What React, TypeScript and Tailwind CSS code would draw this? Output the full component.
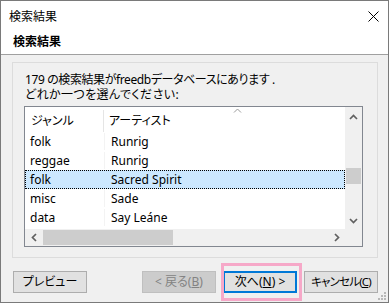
import React from "react";

const font = "font-['Noto_Sans','Noto_Sans_CJK_JP',sans-serif] [font-feature-settings:'palt']";

function ChevUp() {
  return (
    <svg width="9" height="6" viewBox="0 0 9 6">
      <path d="M1 5 L4.5 1.5 L8 5" fill="none" stroke="#606060" strokeWidth="1.7" />
    </svg>
  );
}
function ChevDown() {
  return (
    <svg width="9" height="6" viewBox="0 0 9 6">
      <path d="M1 1 L4.5 4.5 L8 1" fill="none" stroke="#606060" strokeWidth="1.7" />
    </svg>
  );
}
function ChevLeft() {
  return (
    <svg width="6" height="9" viewBox="0 0 6 9">
      <path d="M5 1 L1.5 4.5 L5 8" fill="none" stroke="#606060" strokeWidth="1.7" />
    </svg>
  );
}
function ChevRight() {
  return (
    <svg width="6" height="9" viewBox="0 0 6 9">
      <path d="M1 1 L4.5 4.5 L1 8" fill="none" stroke="#606060" strokeWidth="1.7" />
    </svg>
  );
}

const rows = [
  { g: "folk", a: "Runrig" },
  { g: "reggae", a: "Runrig" },
  { g: "folk", a: "Sacred Spirit", sel: true },
  { g: "misc", a: "Sade" },
  { g: "data", a: "Say Leáne" },
];

export default function App() {
  return (
    <div className={`relative w-[389px] h-[303px] border border-[#7a7a7a] flex flex-col bg-[#f0f0f0] text-black text-[12px] ${font}`}>
      {/* title bar */}
      <div className="h-[30px] bg-white flex items-center pl-[8px] pr-[9px] justify-between">
        <span className="leading-[15px]">検索結果</span>
        <svg width="11" height="11" viewBox="0 0 11 11">
          <path d="M0.5 0.5 L10.5 10.5 M10.5 0.5 L0.5 10.5" stroke="#000" strokeWidth="1" />
        </svg>
      </div>
      {/* header */}
      <div className="h-[24px] bg-white border-b border-[#a0a0a0] flex items-center pl-[12px] pb-[2px]">
        <span className="font-bold leading-[15px]">検索結果</span>
      </div>
      {/* body */}
      <div className="ml-[11px] mt-[7px] w-[366px] h-[196px] border border-[#dcdcdc] pl-[11px] pt-[9px]">
        <div className="pl-[1px] flex flex-col">
          <div className="h-[15px] leading-[15px] tracking-[-0.4px] whitespace-nowrap">179 の検索結果がfreedbデータベースにあります .</div>
          <div className="h-[15px] leading-[15px] tracking-[0.4px] whitespace-nowrap">どれか一つを選んでください:</div>
        </div>
        <div className="mt-[4px] w-[339px] h-[141px] border border-[#828790] bg-white grid grid-cols-[320px_17px] grid-rows-[122px_17px]">
          {/* content */}
          <div className="relative flex flex-col">
            <div className="h-[25px] flex items-center pt-[3px]">
              <div className="w-[79px] pl-[6px] border-r border-[#e5e5e5] h-full flex items-center">ジャンル</div>
              <div className="pl-[5px]">アーティスト</div>
              <div className="absolute left-[208px] top-[1px]">
                <svg width="9" height="5" viewBox="0 0 9 5">
                  <path d="M1 4.5 L4.5 1 L8 4.5" fill="none" stroke="#9a9a9a" strokeWidth="1" />
                </svg>
              </div>
            </div>
            {rows.map((r, i) => (
              <div
                key={i}
                className={`h-[19px] flex items-center ${r.sel ? "bg-[#cce8ff] border border-dotted border-black" : "border border-transparent"}`}
              >
                <div className={`w-[79px] pl-[4px] h-full flex items-center ${r.sel ? "" : "border-r border-[#f3f3f3]"}`}>{r.g}</div>
                <div className="pl-[6px]">{r.a}</div>
              </div>
            ))}
          </div>
          {/* vertical scrollbar */}
          <div className="bg-[#f0f0f0] flex flex-col">
            <div className="h-[17px] flex items-center justify-center pt-[2px]"><ChevUp /></div>
            <div className="mt-[44px] mx-[1px] h-[16px] bg-[#cdcdcd]" />
            <div className="flex-1" />
            <div className="h-[17px] flex items-center justify-center"><ChevDown /></div>
          </div>
          {/* horizontal scrollbar */}
          <div className="bg-[#f0f0f0] flex items-stretch">
            <div className="w-[17px] flex items-center justify-center"><ChevLeft /></div>
            <div className="ml-[1px] my-[1px] w-[130px] bg-[#cdcdcd]" />
            <div className="flex-1" />
            <div className="w-[17px] flex items-center justify-center"><ChevRight /></div>
          </div>
          <div className="bg-[#f0f0f0]" />
        </div>
      </div>
      {/* buttons */}
      <div className="mt-[13px] flex items-center pl-[12px] pr-[10px]">
        <button className="w-[74px] h-[22px] border border-[#adadad] bg-[#e1e1e1] leading-none">プレビュー</button>
        <div className="flex-1" />
        <button className="w-[74px] h-[22px] border border-[#bfbfbf] bg-[#cccccc] text-[#838383] leading-none">
          &lt; 戻る(<span className="underline">B</span>)
        </button>
        <button className="ml-[7px] w-[74px] h-[22px] border-2 border-[#0078d7] bg-[#e1e1e1] leading-none">
          次へ(<span className="underline">N</span>) &gt;
        </button>
        <button className="ml-[7px] w-[74px] h-[22px] border border-[#adadad] bg-[#e1e1e1] leading-none whitespace-nowrap tracking-[-0.8px] text-[11.5px]">
          キャンセル(<span className="underline">C</span>)
        </button>
      </div>
      {/* highlight annotation */}
      <div className="absolute left-[220px] top-[262px] w-[81px] h-[38px] border-[3px] border-[#f6a8c8] pointer-events-none" />
      {/* resize grip */}
      <svg className="absolute right-[1px] bottom-[1px]" width="10" height="10" viewBox="0 0 10 10">
        <rect x="7" y="1" width="2" height="2" fill="#b8b8b8" />
        <rect x="4" y="4" width="2" height="2" fill="#b8b8b8" />
        <rect x="7" y="4" width="2" height="2" fill="#b8b8b8" />
        <rect x="1" y="7" width="2" height="2" fill="#b8b8b8" />
        <rect x="4" y="7" width="2" height="2" fill="#b8b8b8" />
        <rect x="7" y="7" width="2" height="2" fill="#b8b8b8" />
      </svg>
    </div>
  );
}
